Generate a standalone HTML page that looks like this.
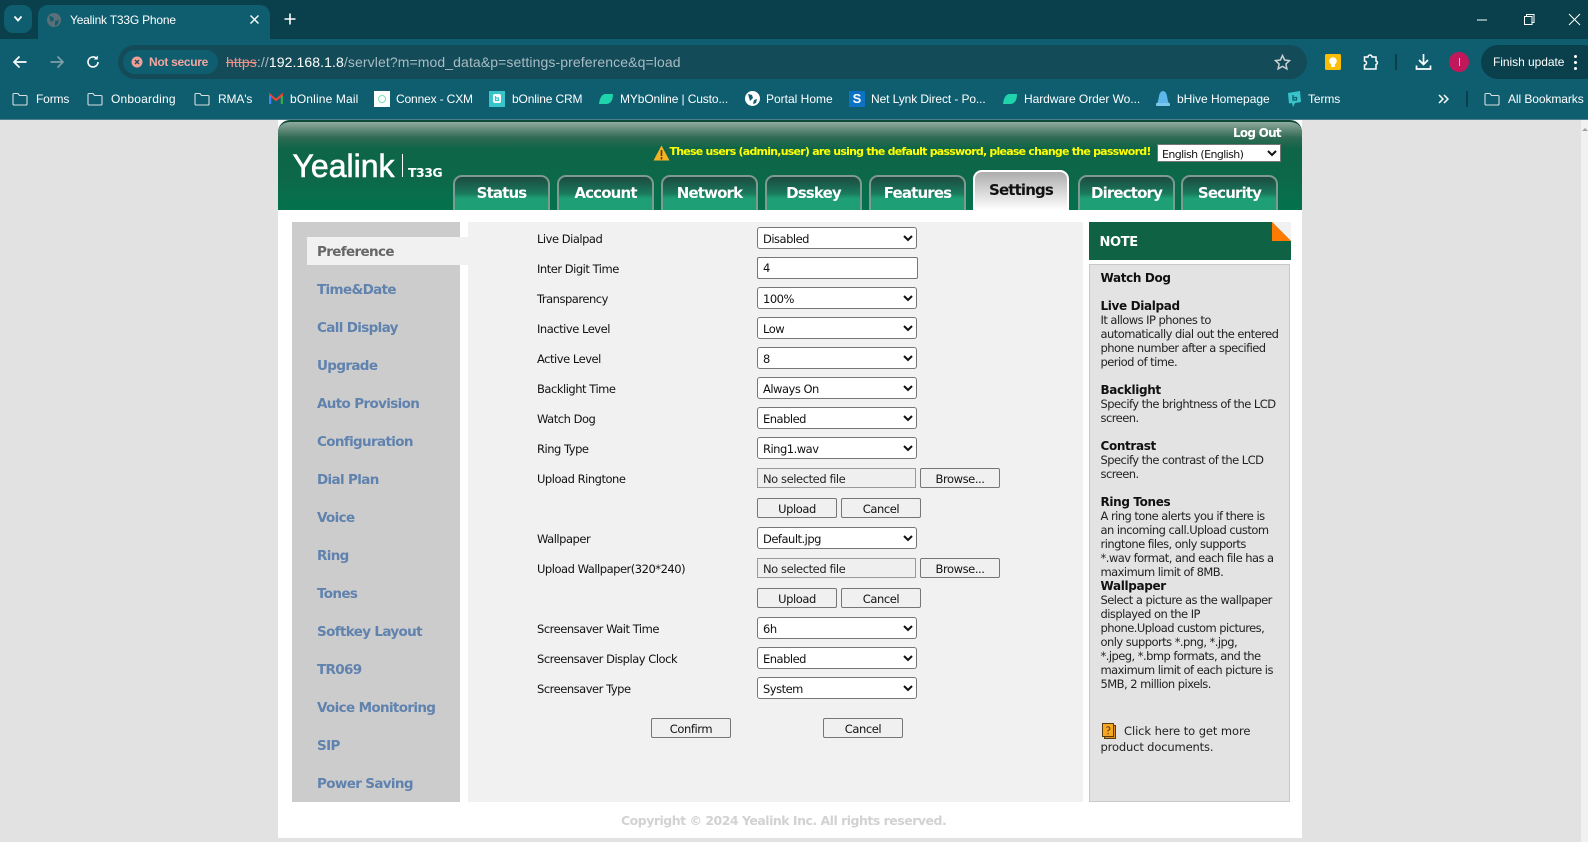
<!DOCTYPE html>
<html><head><meta charset="utf-8"><title>Yealink T33G Phone</title>
<style>
*{box-sizing:border-box;margin:0;padding:0}
html,body{width:1588px;height:842px;overflow:hidden;background:#e2e2e2}
body{position:relative;font-family:"DejaVu Sans","Liberation Sans",sans-serif}
.a{position:absolute;white-space:nowrap}
.c{font-family:"Liberation Sans",sans-serif;font-size:12px;color:#fff;line-height:16px;height:16px}
svg{position:absolute;display:block}
.tab{position:absolute;top:175px;height:35px;width:97px;border:2px solid #7f9a90;border-bottom:0;border-radius:9px 9px 0 0;background:linear-gradient(#1c4a3f 0,#1a7a5c 50%,#1f9f76 65%,#1f9f76 100%);color:#fff;font:bold 15px/32px "DejaVu Sans",sans-serif;letter-spacing:-.85px;text-align:center}
.side{position:absolute;left:317px;font:bold 13.5px/18px "DejaVu Sans",sans-serif;letter-spacing:-.65px;color:#5f82ae;white-space:nowrap}
.lb{position:absolute;left:537px;font-size:11.5px;line-height:16px;letter-spacing:-.48px;color:#111;white-space:nowrap}
select{position:absolute;left:757px;width:160px;height:22px;font:11.5px "DejaVu Sans",sans-serif;letter-spacing:-.5px;color:#111;background:#fff;border:1px solid #767676;border-radius:3px;padding:1px 0 0 1px}
.tx{position:absolute;height:22px;background:#fff;border:1px solid #767676;border-radius:2px;font-size:11.5px;line-height:21px;padding-left:5px;color:#111}
.fl{position:absolute;left:757px;width:159px;height:20px;background:#efefef;border:1px solid #999;font-size:11.5px;letter-spacing:-.42px;line-height:20px;padding-left:5px;color:#222;white-space:nowrap}
.bt{position:absolute;height:20px;width:80px;background:#f0f0f0;border:1px solid #767676;border-radius:2px;font-size:11.5px;letter-spacing:-.42px;line-height:20px;text-align:center;color:#111}
.n{position:absolute;left:1100.5px;font-size:11.5px;line-height:14px;letter-spacing:-.54px;color:#222;white-space:nowrap}
.n b{font-size:12px;letter-spacing:-.35px;color:#111}
</style></head><body>

<!-- browser chrome -->
<div class="a" style="left:0;top:0;width:1588px;height:39px;background:#0a3f4c"></div>
<div class="a" style="left:0;top:39px;width:1588px;height:81px;background:#0f5e70"></div>
<div class="a" style="left:0;top:119px;width:1588px;height:1px;background:#4d7f8b"></div>
<div class="a" style="left:4px;top:5px;width:28px;height:28px;border-radius:9px;background:#0f5e70"></div>
<svg style="left:13px;top:15px" width="10" height="8"><path d="M1.5 1.5L5 5.5 8.5 1.5" fill="none" stroke="#fff" stroke-width="1.8"/></svg>
<div class="a" style="left:38px;top:5px;width:232px;height:36px;background:#0f5e70;border-radius:10px 10px 0 0"></div>
<svg style="left:46px;top:12px" width="16" height="16"><circle cx="8" cy="8" r="7" fill="#5b6f78"/><path d="M3 4l4 1 1 3-3 2zM9 9l4-1-1 4-3 2z" fill="#0f5e70"/></svg>
<div class="a c" style="left:70px;top:12px;letter-spacing:-.2px">Yealink T33G Phone</div>
<svg style="left:249px;top:14px" width="11" height="11"><path d="M1.5 1.5l8 8M9.500 1.500l-8 8" stroke="#fff" stroke-width="1.4"/></svg>
<svg style="left:284px;top:13px" width="12" height="12"><path d="M6 .5v11M.5 6h11" stroke="#fff" stroke-width="1.6"/></svg>
<svg style="left:1476px;top:14px" width="12" height="12"><path d="M1 6h10" stroke="#fff" stroke-width="1"/></svg>
<svg style="left:1523px;top:13px" width="13" height="13"><path d="M1.500 3.500h7.500v8h-7.500zM3.500 3.500v-2h7.500v8h-2" fill="none" stroke="#fff" stroke-width="1"/></svg>
<svg style="left:1568px;top:13px" width="13" height="13"><path d="M1 1l11 11M12 1L1 12" stroke="#fff" stroke-width="1"/></svg>

<svg style="left:12px;top:54px" width="16" height="16"><path d="M14.500 8H2M7.500 2.500L2 8l5.500 5.500" fill="none" stroke="#fff" stroke-width="1.700"/></svg>
<svg style="left:49px;top:54px" width="16" height="16"><path d="M1.500 8H14M8.500 2.500L14 8l-5.500 5.500" fill="none" stroke="#7d9ea8" stroke-width="1.700"/></svg>
<svg style="left:85px;top:54px" width="16" height="16"><path d="M13 8a5 5 0 1 1-1.500-3.600" fill="none" stroke="#fff" stroke-width="1.600"/><path d="M12.800 1.500v4h-4z" fill="#fff"/></svg>

<div class="a" style="left:118px;top:45px;width:1189px;height:34px;border-radius:17px;background:#144b58"></div>
<div class="a" style="left:123px;top:50px;width:95px;height:24px;border-radius:12px;background:#0f5e70"></div>
<svg style="left:131px;top:56px" width="12" height="12"><circle cx="6" cy="6" r="5.500" fill="#f09e97"/><path d="M4 4l4 4M8 4l-4 4" stroke="#144b58" stroke-width="1.300"/></svg>
<div class="a c" style="left:149px;top:54px;color:#f2a69f;font-weight:bold;letter-spacing:-.3px">Not secure</div>
<div class="a" style="left:226px;top:53px;font:14px/18px 'Liberation Sans',sans-serif;color:#a8bcc3;letter-spacing:.1px"><span style="color:#ee9188;text-decoration:line-through">https</span>://<span style="color:#fff">192.168.1.8</span>/servlet?m=mod_data&amp;p=settings-preference&amp;q=load</div>
<svg style="left:1274px;top:54px" width="17" height="17"><path d="M8.500 1.500l2.100 4.500 4.900.6-3.600 3.400 1 4.900-4.400-2.500-4.400 2.500 1-4.900-3.600-3.400 4.900-.6z" fill="none" stroke="#c6d0d3" stroke-width="1.500"/></svg>
<svg style="left:1325px;top:54px" width="16" height="16"><rect width="16" height="16" rx="1.500" fill="#fbbc04"/><circle cx="8" cy="7" r="3.800" fill="#fff"/><rect x="6" y="10" width="4" height="3" rx="1" fill="#fff"/></svg>
<svg style="left:1362px;top:53px" width="18" height="18"><path d="M2.500 4h3.500a2 2 0 0 1 4 0h4v4a1.800 1.800 0 0 1 0 3.500v4.500H2.500v-4a2 2 0 0 0 0-4z" fill="none" stroke="#fff" stroke-width="1.500"/></svg>
<div class="a" style="left:1395px;top:54px;width:2px;height:16px;background:#0a3f4c"></div>
<svg style="left:1415px;top:53px" width="17" height="18"><path d="M8.500 1v10M4 7l4.500 4.500L13 7M1.500 12.500v3.500h14v-3.500" fill="none" stroke="#fff" stroke-width="1.700"/></svg>
<div class="a" style="left:1449px;top:52px;width:20px;height:20px;border-radius:50%;background:#c2185b"></div>
<div class="a" style="left:1458.500px;top:58px;width:1px;height:8px;background:#f3b6cd"></div>
<div class="a" style="left:1481px;top:45px;width:120px;height:34px;border-radius:17px;background:#0a3f4c"></div>
<div class="a c" style="left:1493px;top:54px;letter-spacing:-.05px">Finish update</div>
<div class="a" style="left:1574px;top:55px;width:3px;height:3px;border-radius:50%;background:#fff;box-shadow:0 6px #fff,0 12px #fff"></div>

<!-- bookmarks -->
<svg style="left:12px;top:92px" width="16" height="14"><path d="M1 2.500a1 1 0 0 1 1-1h4l1.500 2H14a1 1 0 0 1 1 1V12a1 1 0 0 1-1 1H2a1 1 0 0 1-1-1z" fill="none" stroke="#d5dee1" stroke-width="1.100"/></svg>
<div class="a c" style="left:36px;top:91px;letter-spacing:-.15px">Forms</div>
<svg style="left:87px;top:92px" width="16" height="14"><path d="M1 2.500a1 1 0 0 1 1-1h4l1.500 2H14a1 1 0 0 1 1 1V12a1 1 0 0 1-1 1H2a1 1 0 0 1-1-1z" fill="none" stroke="#d5dee1" stroke-width="1.100"/></svg>
<div class="a c" style="left:111px;top:91px;letter-spacing:.2px">Onboarding</div>
<svg style="left:194px;top:92px" width="16" height="14"><path d="M1 2.500a1 1 0 0 1 1-1h4l1.500 2H14a1 1 0 0 1 1 1V12a1 1 0 0 1-1 1H2a1 1 0 0 1-1-1z" fill="none" stroke="#d5dee1" stroke-width="1.100"/></svg>
<div class="a c" style="left:218px;top:91px;letter-spacing:-.15px">RMA's</div>
<svg style="left:269px;top:93px" width="14" height="12"><path d="M1 11V2l6 5 6-5v9" fill="none" stroke="#ea4335" stroke-width="2.200"/><path d="M1.100 11V3" stroke="#4285f4" stroke-width="2.200"/><path d="M12.900 11V3" stroke="#34a853" stroke-width="2.200"/></svg>
<div class="a c" style="left:290px;top:91px;letter-spacing:.15px">bOnline Mail</div>
<div class="a" style="left:374px;top:91px;width:16px;height:16px;background:#fff"></div>
<div class="a" style="left:378px;top:95px;width:8px;height:8px;border:1.500px solid #7be3b0;border-radius:50%"></div>
<div class="a c" style="left:396px;top:91px;letter-spacing:-.15px">Connex - CXM</div>
<svg style="left:489px;top:91px" width="16" height="17"><rect width="16" height="16" fill="#39c4c9"/><rect x="4" y="3" width="8" height="9" rx="2" fill="#fff"/><path d="M6.500 5v4.500h3v-2.500h-3" fill="none" stroke="#39c4c9" stroke-width="1.200"/></svg>
<div class="a c" style="left:512px;top:91px;letter-spacing:-.15px">bOnline CRM</div>
<svg style="left:598px;top:93px" width="16" height="12"><path d="M1 11Q2 2 7 1h8q0 9-6 10z" fill="#1fd3ab"/></svg>
<div class="a c" style="left:620px;top:91px;letter-spacing:-.12px">MYbOnline | Custo...</div>
<svg style="left:745px;top:91px" width="15" height="15"><circle cx="7.500" cy="7.500" r="7.500" fill="#fff"/><path d="M3 3l4 1 1 3-3 3zM9 9l3-1-1 4-3 1z" fill="#0f5e70"/></svg>
<div class="a c" style="left:766px;top:91px">Portal Home</div>
<div class="a" style="left:849px;top:91px;width:16px;height:16px;background:#0b72c4;color:#fff;font:bold 13px/16px 'Liberation Sans',sans-serif;text-align:center">S</div>
<div class="a c" style="left:871px;top:91px;letter-spacing:-.1px">Net Lynk Direct - Po...</div>
<svg style="left:1002px;top:93px" width="16" height="12"><path d="M1 11Q2 2 7 1h8q0 9-6 10z" fill="#1fd3ab"/></svg>
<div class="a c" style="left:1024px;top:91px;letter-spacing:-.05px">Hardware Order Wo...</div>
<svg style="left:1155px;top:90px" width="16" height="17"><path d="M1 15q2-2 3-9 1-5 4-5t4 5q1 7 3 9z" fill="#5db7e8"/><rect x="1" y="13" width="14" height="3" rx="1" fill="#7cc8ef"/></svg>
<div class="a c" style="left:1177px;top:91px">bHive Homepage</div>
<svg style="left:1287px;top:90px" width="15" height="18"><path d="M1 3l12-2 1 11-6 1-2 4-1-4-3 .5z" fill="#39c4c9"/><path d="M6 5v5h3.500V7.500H6" fill="none" stroke="#0f5e70" stroke-width="1.300"/></svg>
<div class="a c" style="left:1308px;top:91px;letter-spacing:-.1px">Terms</div>
<svg style="left:1438px;top:94px" width="11" height="10"><path d="M1 1l4 4-4 4M6 1l4 4-4 4" fill="none" stroke="#fff" stroke-width="1.500"/></svg>
<div class="a" style="left:1466px;top:91px;width:2px;height:16px;background:#0a3f4c"></div>
<svg style="left:1484px;top:92px" width="16" height="14"><path d="M1 2.500a1 1 0 0 1 1-1h4l1.500 2H14a1 1 0 0 1 1 1V12a1 1 0 0 1-1 1H2a1 1 0 0 1-1-1z" fill="none" stroke="#d5dee1" stroke-width="1.100"/></svg>
<div class="a c" style="left:1508px;top:91px;letter-spacing:-.08px">All Bookmarks</div>

<!-- page -->
<div class="a" style="left:1581px;top:120px;width:7px;height:722px;background:#f1f1f1"></div>
<div class="a" style="left:278px;top:120px;width:1024px;height:718px;background:#fff"></div>
<div class="a" style="left:278px;top:120px;width:1024px;height:90px;border-radius:12px 12px 0 0;border-top:2px solid #0e4a38;background:linear-gradient(#8fab9f 0,#6f9484 6%,#2f6a55 18%,#0f6547 30%,#0d6749 60%,#04724c 100%)"></div>
<div class="a" style="left:292.500px;top:148px;font:32px/36px 'Liberation Sans',sans-serif;color:#fff;-webkit-text-stroke:.6px #fff">Yealink</div>
<div class="a" style="left:402px;top:154px;width:1px;height:23px;background:#fff"></div>
<div class="a" style="left:408px;top:165px;font:bold 12.500px/16px 'DejaVu Sans',sans-serif;color:#fff;letter-spacing:-.5px">T33G</div>
<svg style="left:653px;top:145px" width="17" height="16"><path d="M8.500 .5L16.500 15.500H.5z" fill="#f5b323"/><path d="M8.500 5v6M8.500 12v2.500" stroke="#5a3a10" stroke-width="1.600"/></svg>
<div class="a" style="left:669.500px;top:144px;font:bold 11px/16px 'DejaVu Sans',sans-serif;color:#ffff00;letter-spacing:-.77px">These users (admin,user) are using the default password, please change the password!</div>
<select style="left:1157px;top:144px;width:124px;height:18px;border-radius:0;font-size:11px;letter-spacing:-.6px;padding:2px 0 0 0">
<option>English (English)</option></select>
<div class="a" style="left:1233px;top:125px;font:bold 12px/16px 'DejaVu Sans',sans-serif;color:#fff;letter-spacing:-.75px">Log Out</div>

<div class="tab" style="left:453px">Status</div>
<div class="tab" style="left:557px">Account</div>
<div class="tab" style="left:661px">Network</div>
<div class="tab" style="left:765px">Dsskey</div>
<div class="tab" style="left:869px">Features</div>
<div class="tab" style="left:973px;top:170px;height:40px;width:96px;border-color:#fff;background:linear-gradient(#adadad,#fff);color:#111;line-height:37px">Settings</div>
<div class="tab" style="left:1078px">Directory</div>
<div class="tab" style="left:1181px">Security</div>

<!-- sidebar -->
<div class="a" style="left:292px;top:222px;width:168px;height:580px;background:#ccc"></div>
<div class="a" style="left:468px;top:222px;width:615px;height:580px;background:#f1f1f1"></div>
<div class="a" style="left:307px;top:237px;width:161px;height:28px;background:#f1f1f1"></div>
<div class="side" style="top:243px;color:#666">Preference</div>
<div class="side" style="top:281px">Time&amp;Date</div>
<div class="side" style="top:319px">Call Display</div>
<div class="side" style="top:357px">Upgrade</div>
<div class="side" style="top:395px">Auto Provision</div>
<div class="side" style="top:433px">Configuration</div>
<div class="side" style="top:471px">Dial Plan</div>
<div class="side" style="top:509px">Voice</div>
<div class="side" style="top:547px">Ring</div>
<div class="side" style="top:585px">Tones</div>
<div class="side" style="top:623px">Softkey Layout</div>
<div class="side" style="top:661px">TR069</div>
<div class="side" style="top:699px">Voice Monitoring</div>
<div class="side" style="top:737px">SIP</div>
<div class="side" style="top:775px">Power Saving</div>

<!-- form -->
<div class="lb" style="top:231px">Live Dialpad</div><select style="top:227px"><option>Disabled</option></select>
<div class="lb" style="top:261px">Inter Digit Time</div><div class="tx" style="left:757px;top:257px;width:161px">4</div>
<div class="lb" style="top:291px">Transparency</div><select style="top:287px"><option>100%</option></select>
<div class="lb" style="top:321px">Inactive Level</div><select style="top:317px"><option>Low</option></select>
<div class="lb" style="top:351px">Active Level</div><select style="top:347px"><option>8</option></select>
<div class="lb" style="top:381px">Backlight Time</div><select style="top:377px"><option>Always On</option></select>
<div class="lb" style="top:411px">Watch Dog</div><select style="top:407px"><option>Enabled</option></select>
<div class="lb" style="top:441px">Ring Type</div><select style="top:437px"><option>Ring1.wav</option></select>
<div class="lb" style="top:471px">Upload Ringtone</div><div class="fl" style="top:468px">No selected file</div><div class="bt" style="left:920px;top:468px">Browse...</div>
<div class="bt" style="left:757px;top:498px">Upload</div><div class="bt" style="left:841px;top:498px">Cancel</div>
<div class="lb" style="top:531px">Wallpaper</div><select style="top:527px"><option>Default.jpg</option></select>
<div class="lb" style="top:561px">Upload Wallpaper(320*240)</div><div class="fl" style="top:558px">No selected file</div><div class="bt" style="left:920px;top:558px">Browse...</div>
<div class="bt" style="left:757px;top:588px">Upload</div><div class="bt" style="left:841px;top:588px">Cancel</div>
<div class="lb" style="top:621px">Screensaver Wait Time</div><select style="top:617px"><option>6h</option></select>
<div class="lb" style="top:651px">Screensaver Display Clock</div><select style="top:647px"><option>Enabled</option></select>
<div class="lb" style="top:681px">Screensaver Type</div><select style="top:677px"><option>System</option></select>
<div class="bt" style="left:651px;top:718px">Confirm</div><div class="bt" style="left:823px;top:718px">Cancel</div>
<div class="a" style="left:621px;top:813px;font:bold 12.500px/16px 'DejaVu Sans',sans-serif;letter-spacing:-.5px;color:#d2d2d2">Copyright © 2024 Yealink Inc. All rights reserved.</div>

<!-- note -->
<div class="a" style="left:1089px;top:222px;width:202px;height:38px;background:#0f6344"></div>
<svg style="left:1272px;top:222px" width="19" height="19"><path d="M0 0h19v19z" fill="#f1f1f1"/><path d="M0 0L19 19H0z" fill="#ff7a00"/></svg>
<div class="a" style="left:1099.500px;top:235px;font:bold 13px/16px 'DejaVu Sans',sans-serif;color:#fff;letter-spacing:-.35px">NOTE</div>
<div class="a" style="left:1089px;top:264px;width:201px;height:538px;background:#e3e3e3;border:1px solid #c8c8c8"></div>
<div class="n" style="top:271px"><b>Watch Dog</b></div>
<div class="n" style="top:299px"><b>Live Dialpad</b><br>It allows IP phones to<br>automatically dial out the entered<br>phone number after a specified<br>period of time.</div>
<div class="n" style="top:383px"><b>Backlight</b><br>Specify the brightness of the LCD<br>screen.</div>
<div class="n" style="top:439px"><b>Contrast</b><br>Specify the contrast of the LCD<br>screen.</div>
<div class="n" style="top:495px"><b>Ring Tones</b><br>A ring tone alerts you if there is<br>an incoming call.Upload custom<br>ringtone files, only supports<br>*.wav format, and each file has a<br>maximum limit of 8MB.<br><b>Wallpaper</b><br>Select a picture as the wallpaper<br>displayed on the IP<br>phone.Upload custom pictures,<br>only supports *.png, *.jpg,<br>*.jpeg, *.bmp formats, and the<br>maximum limit of each picture is<br>5MB, 2 million pixels.</div>
<svg style="left:1102px;top:723px" width="14" height="16"><rect x="2.500" y="2.500" width="11" height="13" fill="#d9921f" stroke="#5a3a10"/><rect x=".5" y=".5" width="11" height="13" fill="#f7a823" stroke="#5a3a10"/><path d="M4.500 4.500q1.500-1.500 3 0t-1.500 3v1M6 10v1.500" fill="none" stroke="#5a3a10"/></svg>
<div class="n" style="left:1124px;top:723px;line-height:16px;letter-spacing:-.08px">Click here to get more</div>
<div class="n" style="top:739px;line-height:16px;letter-spacing:-.15px">product documents.</div>
<svg style="left:1581px;top:127px" width="7" height="5"><path d="M1 4l3-3 3 3z" fill="#a3a3a3"/></svg>
</body></html>
